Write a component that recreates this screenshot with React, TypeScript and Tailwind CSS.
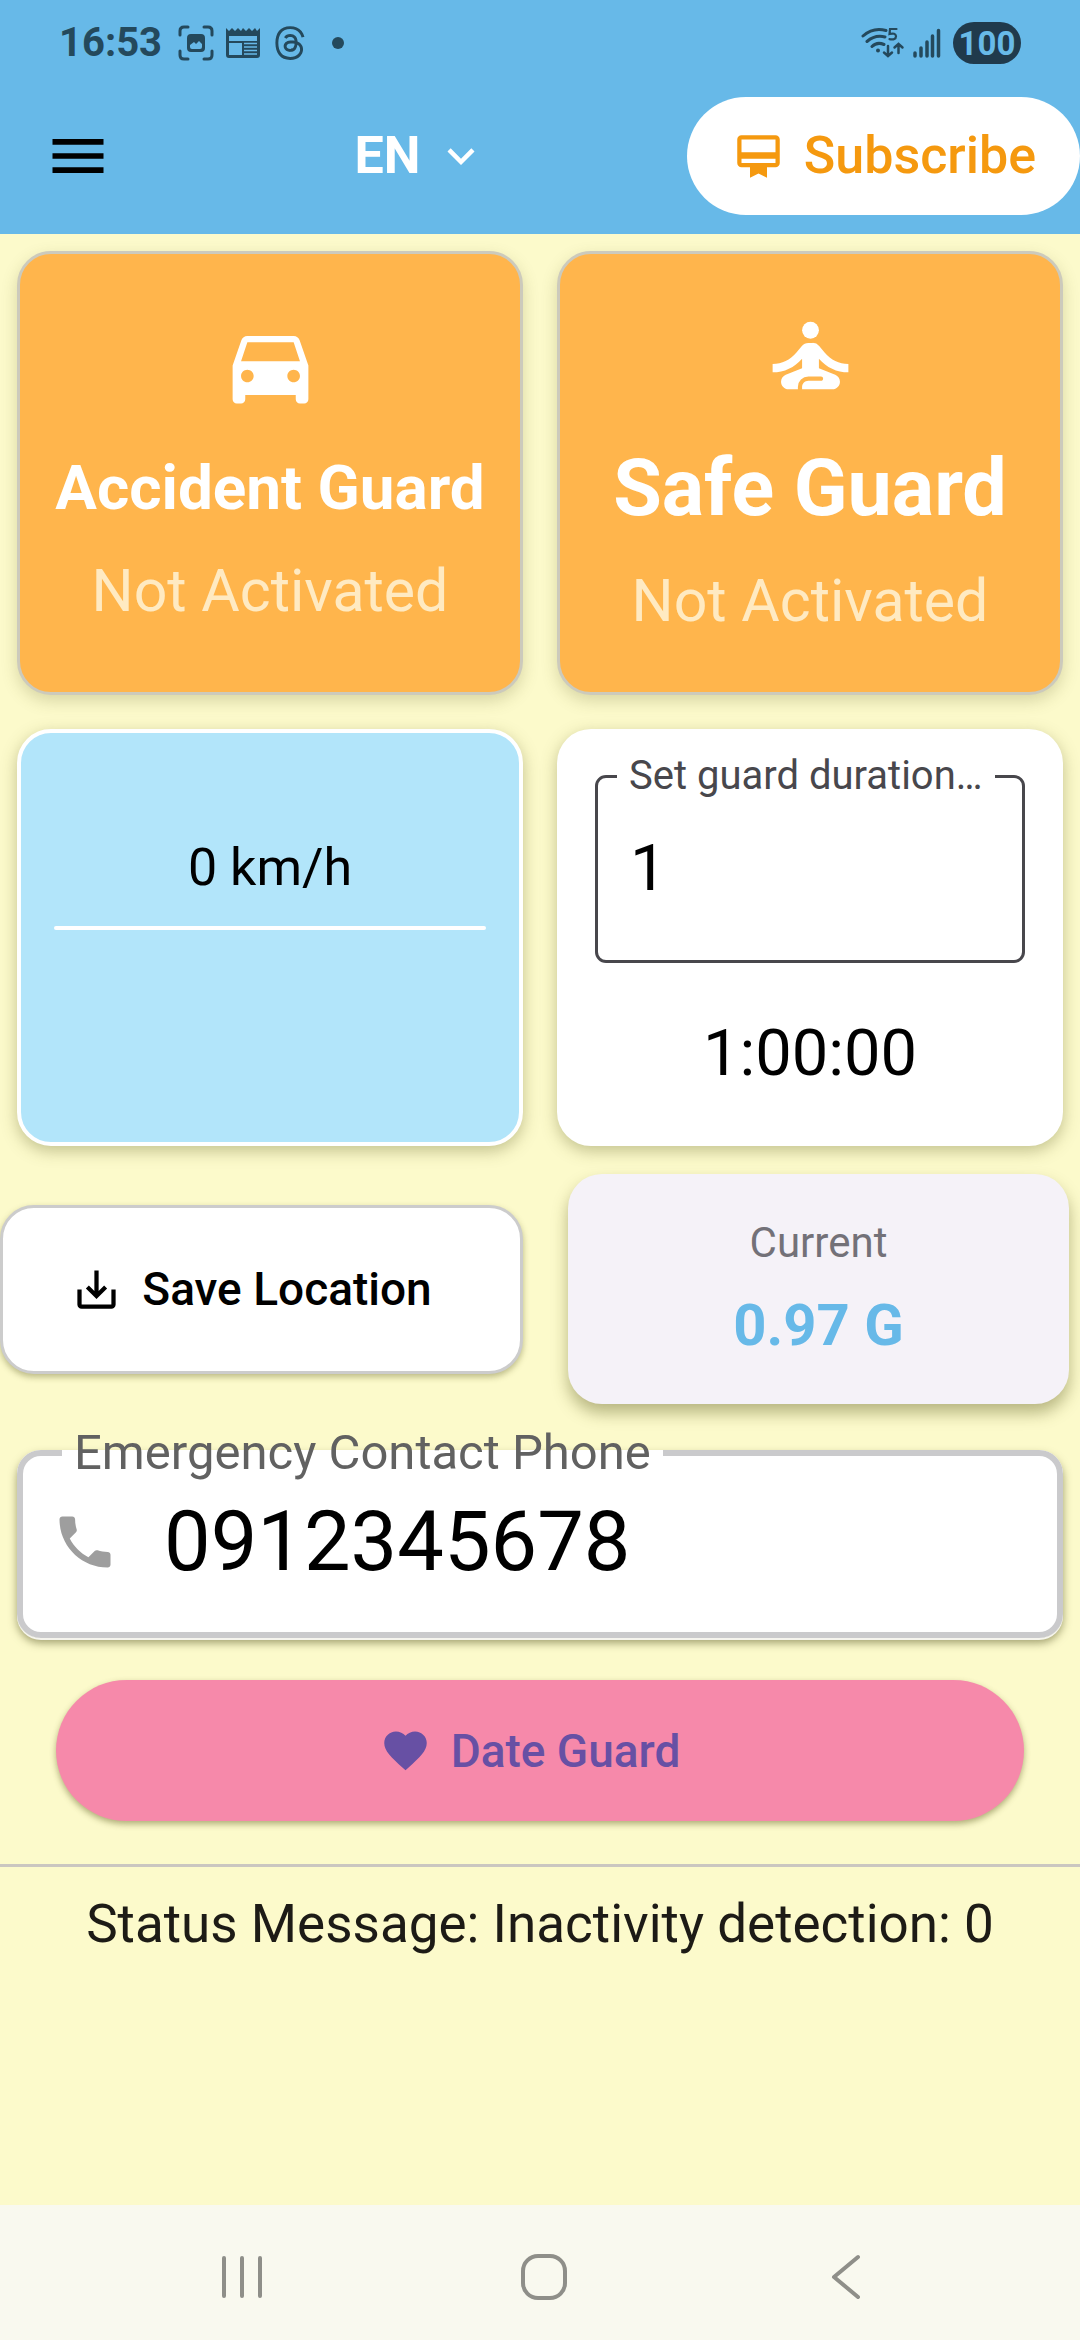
import { useState } from "react";
import {
  MdMenu,
  MdKeyboardArrowDown,
  MdCardMembership,
  MdDirectionsCar,
  MdSelfImprovement,
  MdSaveAlt,
  MdPhone,
  MdFavorite,
} from "react-icons/md";
import { FaThreads } from "react-icons/fa6";

function ScreenshotIcon() {
  return (
    <svg width="36" height="36" viewBox="0 0 36 36" fill="none" stroke="currentColor" strokeWidth="3" strokeLinecap="round" aria-hidden="true">
      <path d="M2 10V6q0-4 4-4h4M26 2h4q4 0 4 4v4M34 26v4q0 4-4 4h-4M10 34H6q-4 0-4-4v-4" />
      <path
        d="M13 9h10q4 0 4 4v10q0 4-4 4H13q-4 0-4-4V13q0-4 4-4zM12 20v2q0 2 2 2h8q2 0 2-2v-3l-3-3-3 3-2-2z"
        fill="currentColor"
        fillRule="evenodd"
        stroke="none"
      />
    </svg>
  );
}

function NewsIcon() {
  return (
    <svg width="34" height="30" viewBox="0 0 34 30" aria-hidden="true">
      <path
        d="M0 0l3 3 3-3 3 3 3-3 3 3 2-3 3 3 3-3 3 3 3-3 2 3 3-3v27q0 3-3 3H3q-3 0-3-3zM3 8v5h28V8zM3 15v12h13V15z"
        fill="currentColor"
        fillRule="evenodd"
      />
      <path d="M18 15.500h13M18 19h13M18 22.500h13M18 26h13" stroke="#67b9e8" strokeWidth="1.500" />
    </svg>
  );
}

function WifiIcon() {
  return (
    <svg width="44" height="32" viewBox="0 0 44 32" fill="none" stroke="currentColor" strokeWidth="3" strokeLinecap="round" aria-hidden="true">
      <path d="M2 9Q12 0 25 3.500M6 14.500q8-7 18-4.500M11 19.500q5-5 12-2" />
      <circle cx="17" cy="23.500" r="2" fill="currentColor" stroke="none" />
      <path d="M27 19v9M23 25.500l4 3.500 4-3.500M37.500 26v-8.500M33.500 20.500l4-3.500 4 3.500" strokeWidth="2.500" />
      <path d="M35.500 2h-6.500l-.5 5q6-1.500 6.500 2.200 0 4-6.500 3" strokeWidth="2.200" />
    </svg>
  );
}

function SignalIcon() {
  return (
    <svg width="28" height="30" viewBox="0 0 28 30" stroke="currentColor" strokeWidth="3.500" strokeLinecap="round" aria-hidden="true">
      <path d="M2 25v3M8 20v8M14 14v14M19.500 8v20M25.500 2.500V28" />
    </svg>
  );
}

function StatusBar() {
  return (
    <div className="flex h-[78px] items-center justify-between pt-2 pr-[59px] pl-[59px] text-[#24495c]">
      <div className="flex items-center">
        <time className="text-[40px] leading-[42px] font-bold">16:53</time>
        <div className="ml-4 flex items-center gap-3">
          <ScreenshotIcon />
          <NewsIcon />
          <FaThreads size={36} aria-hidden="true" />
        </div>
        <span className="ml-6 size-3 rounded-full bg-[#24495c]" />
      </div>
      <div className="flex items-center">
        <WifiIcon />
        <span className="ml-2">
          <SignalIcon />
        </span>
        <span className="ml-3 flex h-[42px] w-[68px] items-center justify-center rounded-full bg-[#203a4c] text-[33px] leading-none font-bold text-[#68bae8]">
          100
        </span>
      </div>
    </div>
  );
}

function AppBar() {
  const [language, setLanguage] = useState("EN");
  return (
    <div className="flex h-[156px] items-center pl-11">
      <button type="button" aria-label="Open menu" className="text-black">
        <MdMenu size={68} />
      </button>
      <div className="flex flex-1 justify-center pl-11">
        <div className="relative text-white">
          <select
            aria-label="Language"
            value={language}
            onChange={(e) => setLanguage(e.target.value)}
            className="appearance-none bg-transparent pr-[68px] text-[52px] leading-[62px] font-bold"
          >
            <option value="EN">EN</option>
          </select>
          <MdKeyboardArrowDown size={54} className="pointer-events-none absolute top-1 right-0" aria-hidden="true" />
        </div>
      </div>
      <button
        type="button"
        className="flex h-[118px] items-center gap-5 rounded-full bg-white pr-11 pl-[46px] text-[52px] leading-[62px] font-medium text-[#f5990f]"
      >
        <MdCardMembership size={51} aria-hidden="true" />
        Subscribe
      </button>
    </div>
  );
}

function GuardCard({ icon, title, titleClass }: { icon: React.ReactNode; title: string; titleClass: string }) {
  return (
    <button
      type="button"
      className="flex h-[444px] flex-col items-center justify-center rounded-[34px] border-[3px] border-[#cccabc] bg-[#ffb54c] text-white shadow-[0_6px_16px_rgba(90,90,30,0.22)]"
    >
      {icon}
      <span className={titleClass}>{title}</span>
      <span className="mt-[27px] text-[59px] leading-[80px] text-[#ffeac2]">Not Activated</span>
    </button>
  );
}

function DurationCard() {
  const [hours, setHours] = useState("1");
  return (
    <section className="rounded-[34px] bg-white px-[38px] pt-7 pb-[55px] shadow-[0_5px_16px_rgba(90,90,30,0.35)]">
      <fieldset className="min-w-0 rounded-[11px] border-[3px] border-[#48474c] pt-[35px] pb-[54px]">
        <legend className="ml-[19px] h-[38px] px-3 text-[40px] leading-[38px] text-[#48474c]">
          <label htmlFor="duration">Set guard duration…</label>
        </legend>
        <input
          id="duration"
          inputMode="numeric"
          value={hours}
          onChange={(e) => setHours(e.target.value)}
          className="block h-[76px] w-full bg-transparent px-8 text-[65px] leading-[76px] text-black outline-none"
        />
      </fieldset>
      <p className="mt-[52px] text-center text-[65px] leading-[76px] text-black">1:00:00</p>
    </section>
  );
}

function PhoneField() {
  const [phone, setPhone] = useState("0912345678");
  return (
    <fieldset className="mx-[17px] mt-6 min-w-0 rounded-[24px] border-[6px] border-[#cacacc] bg-white pt-4 pb-[42px] shadow-[0_2px_0_#f6f5ee,0_5px_8px_rgba(70,70,20,0.5)]">
      <legend className="ml-[39px] px-3 text-[49px] leading-[50px] text-[#616161]">
        <label htmlFor="phone">Emergency Contact Phone</label>
      </legend>
      <div className="flex items-center gap-[45px] pr-7 pl-7">
        <MdPhone size={68} className="shrink-0 text-[#9e9e9e]" aria-hidden="true" />
        <input
          id="phone"
          type="tel"
          value={phone}
          onChange={(e) => setPhone(e.target.value)}
          className="h-24 w-full min-w-0 bg-transparent text-[83px] leading-[96px] text-black outline-none"
        />
      </div>
    </fieldset>
  );
}

function NavBar() {
  return (
    <nav className="flex h-[135px] items-center bg-[#f9f9ef] pt-2 pr-[83px] pl-[91px] text-[#8f8f89]">
      <button type="button" aria-label="Recent apps" className="flex flex-1 justify-center">
        <svg width="46" height="46" viewBox="0 0 46 46" stroke="currentColor" strokeWidth="4" strokeLinecap="round" aria-hidden="true">
          <path d="M5 4v38M23 4v38M41 4v38" />
        </svg>
      </button>
      <button type="button" aria-label="Home" className="flex flex-1 justify-center">
        <svg width="46" height="46" viewBox="0 0 46 46" fill="none" stroke="currentColor" strokeWidth="4" aria-hidden="true">
          <rect x="2" y="2" width="42" height="42" rx="15" />
        </svg>
      </button>
      <button type="button" aria-label="Back" className="flex flex-1 justify-center">
        <svg width="46" height="46" viewBox="0 0 46 46" fill="none" stroke="currentColor" strokeWidth="4" strokeLinecap="round" strokeLinejoin="round" aria-hidden="true">
          <path d="M35 3L11 23l24 20" />
        </svg>
      </button>
    </nav>
  );
}

export default function App() {
  return (
    <div className="flex min-h-screen flex-col bg-[#fcfacb] font-[Roboto,sans-serif]">
      <header className="bg-[#67b9e8]">
        <StatusBar />
        <AppBar />
      </header>

      <main className="flex-1">
        <div className="grid grid-cols-2 gap-[34px] px-[17px] pt-[17px]">
          <GuardCard
            icon={<MdDirectionsCar size={101} aria-hidden="true" />}
            title="Accident Guard"
            titleClass="mt-9 text-[62px] leading-[72px] font-bold"
          />
          <GuardCard
            icon={<MdSelfImprovement size={101} aria-hidden="true" />}
            title="Safe Guard"
            titleClass="mt-9 text-[79px] leading-[92px] font-bold"
          />
          <section className="rounded-[34px] border-4 border-white bg-[#b2e5fa] px-[33px] pt-[104px] shadow-[0_5px_16px_rgba(90,90,30,0.35)]">
            <p className="text-center text-[52px] leading-[62px] text-black">0 km/h</p>
            <hr className="mt-[27px] rounded-full border-t-4 border-white" />
          </section>
          <DurationCard />
        </div>

        <div className="mt-7 grid grid-cols-2 items-center">
          <button
            type="button"
            className="mr-[17px] flex h-[169px] items-center justify-center gap-5 rounded-[34px] border-[3px] border-[#cccccc] bg-white pr-5 text-[46px] leading-[54px] font-medium text-black shadow-[0_3px_6px_rgba(90,90,30,0.4)]"
          >
            <MdSaveAlt size={51} aria-hidden="true" />
            Save Location
          </button>
          <section className="mr-[11px] ml-7 rounded-[34px] bg-[#f5f2f8] pt-[45px] pb-[46px] text-center shadow-[0_9px_16px_rgba(80,80,20,0.4)]">
            <p className="text-[42px] leading-[48px] text-[#737178]">Current</p>
            <p className="mt-[25px] text-[58px] leading-[66px] font-bold text-[#67b9e8]">0.97 G</p>
          </section>
        </div>

        <PhoneField />

        <div className="mt-[42px] px-14">
          <button
            type="button"
            className="flex h-[141px] w-full items-center justify-center gap-5 rounded-full bg-[#f689aa] pr-5 text-[46px] leading-[54px] font-medium text-[#6750a4] shadow-[0_3px_6px_rgba(80,80,20,0.45)]"
          >
            <MdFavorite size={51} aria-hidden="true" />
            Date Guard
          </button>
        </div>

        <hr className="mt-[43px] border-t-[3px] border-[#cac6c0]" />
        <p className="mt-[26px] text-center text-[53px] leading-[62px] text-[#1d1b16]">
          Status Message: Inactivity detection: 0
        </p>
      </main>

      <NavBar />
    </div>
  );
}
